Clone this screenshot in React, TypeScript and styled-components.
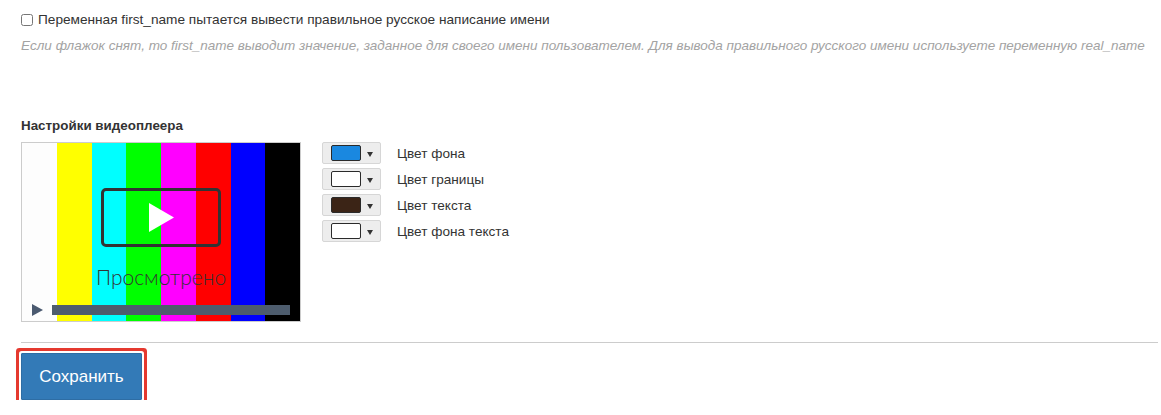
import React from "react";
import styled, { createGlobalStyle } from "styled-components";

const Global = createGlobalStyle`
  html, body { margin: 0; padding: 0; background: #fff; }
  body { font-family: "Liberation Sans", Arial, sans-serif; color: #333; }
`;

const Page = styled.div`
  padding: 11px 3px 0 21px;
  width: 1161px;
  box-sizing: border-box;
`;

const CheckRow = styled.label`
  display: flex;
  align-items: center;
  gap: 5px;
  font-size: 13.65px;
  line-height: 18px;
  color: #333;
`;

const Check = styled.input`
  margin: 0;
  width: 12px;
  height: 12px;
`;

const Hint = styled.div`
  margin-top: 8px;
  font-size: 13.5px;
  line-height: 18px;
  font-style: italic;
  color: #a3a3a3;
`;

const Heading = styled.div`
  margin-top: 63px;
  font-size: 13.4px;
  line-height: 16px;
  font-weight: bold;
  color: #333;
`;

const PlayerSection = styled.div`
  display: flex;
  gap: 21px;
  margin-top: 8px;
  align-items: flex-start;
`;

const Preview = styled.div`
  position: relative;
  width: 280px;
  height: 180px;
  box-sizing: border-box;
  border: 1px solid #ccc;
  display: flex;
`;

const Stripe = styled.div<{ $c: string }>`
  flex: 1;
  background: ${(p) => p.$c};
`;

const PlayFrame = styled.div`
  position: absolute;
  left: 79px;
  top: 45px;
  width: 120px;
  height: 59px;
  box-sizing: border-box;
  border: 3px solid #333;
  border-radius: 5px;
  display: flex;
  align-items: center;
  justify-content: center;
`;

const Watched = styled.div`
  position: absolute;
  left: 0;
  right: 0;
  top: 122px;
  text-align: center;
  font-family: "Lato", "Liberation Sans", sans-serif;
  font-weight: 300;
  font-size: 21px;
  line-height: 24px;
  color: #333;
`;

const Controls = styled.div`
  position: absolute;
  left: 10px;
  right: 10px;
  top: 161px;
  display: flex;
  align-items: center;
  gap: 9px;
`;

const Bar = styled.div`
  flex: 1;
  height: 10px;
  background: #4e5d6e;
`;

const ColorList = styled.div`
  display: flex;
  flex-direction: column;
  gap: 4px;
`;

const ColorRow = styled.div`
  display: flex;
  align-items: center;
  gap: 16px;
  font-size: 13.6px;
  color: #333;
`;

const SwatchButton = styled.div`
  width: 59px;
  height: 22px;
  box-sizing: border-box;
  background: #ededed;
  border: 1px solid #d6d6d6;
  border-radius: 2px;
  display: flex;
  align-items: center;
  padding-left: 8px;
  gap: 6px;
`;

const Swatch = styled.div<{ $c: string }>`
  width: 30px;
  height: 16px;
  box-sizing: border-box;
  border: 1px solid #2a2a2a;
  border-radius: 2px;
  background: ${(p) => p.$c};
`;

const Caret = styled.div`
  width: 0;
  height: 0;
  margin-top: 3px;
  border-left: 3px solid transparent;
  border-right: 3px solid transparent;
  border-top: 5px solid #333;
`;

const Divider = styled.hr`
  margin: 20px 0 0;
  border: 0;
  border-top: 1px solid #ccc;
`;

const SaveButton = styled.button`
  margin-top: 10px;
  width: 121px;
  height: 47px;
  box-sizing: border-box;
  background: #337ab7;
  border: 1px solid #2e6da4;
  border-radius: 1px;
  color: #fff;
  font-family: "Liberation Sans", Arial, sans-serif;
  font-size: 17px;
  box-shadow: 0 0 0 2px #fff, 0 0 0 5px #e5392f;
  cursor: pointer;
`;

const stripes = ["#fdfdfd", "#ffff00", "#00ffff", "#00ff00", "#ff00ff", "#ff0000", "#0000ff", "#000000"];

const colors = [
  { c: "#1a88e0", label: "Цвет фона" },
  { c: "#ffffff", label: "Цвет границы" },
  { c: "#3b2416", label: "Цвет текста" },
  { c: "#ffffff", label: "Цвет фона текста" },
];

export default function App() {
  return (
    <Page>
      <Global />
      <CheckRow>
        <Check type="checkbox" />
        Переменная first_name пытается вывести правильное русское написание имени
      </CheckRow>
      <Hint>
        Если флажок снят, то first_name выводит значение, заданное для своего имени пользователем. Для вывода
        правильного русского имени используете переменную real_name
      </Hint>
      <Heading>Настройки видеоплеера</Heading>
      <PlayerSection>
        <Preview>
          {stripes.map((s, i) => (
            <Stripe key={i} $c={s} />
          ))}
          <PlayFrame>
            <svg width="26" height="29" viewBox="0 0 26 29">
              <polygon points="1,0 26,14.5 1,29" fill="#fff" />
            </svg>
          </PlayFrame>
          <Watched>Просмотрено</Watched>
          <Controls>
            <svg width="11" height="12" viewBox="0 0 11 12">
              <polygon points="0,0 11,6 0,12" fill="#4b5a70" />
            </svg>
            <Bar />
          </Controls>
        </Preview>
        <ColorList>
          {colors.map((c) => (
            <ColorRow key={c.label}>
              <SwatchButton>
                <Swatch $c={c.c} />
                <Caret />
              </SwatchButton>
              {c.label}
            </ColorRow>
          ))}
        </ColorList>
      </PlayerSection>
      <Divider />
      <SaveButton>Сохранить</SaveButton>
    </Page>
  );
}
